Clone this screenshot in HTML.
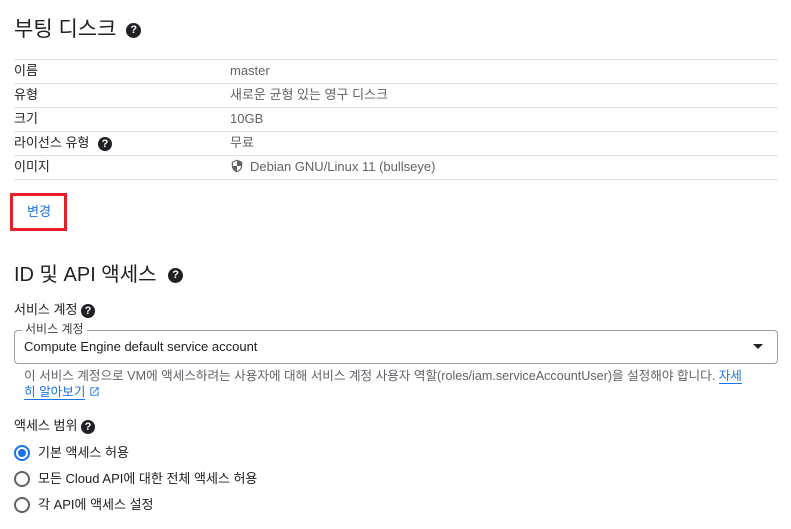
<!DOCTYPE html>
<html><head><meta charset="utf-8"><style>
body{margin:0;background:#fff;font-family:"Liberation Sans","Noto Sans CJK KR",sans-serif;color:#202124;width:791px;height:529px;overflow:hidden;position:relative}
.a{position:absolute;white-space:nowrap}
.q{display:inline-block;width:14px;height:14px;border-radius:50%;background:#202124;color:#fff;font-size:11px;font-weight:bold;text-align:center;line-height:14px;vertical-align:middle}
.line{position:absolute;left:14px;width:764px;height:1px;background:#e0e0e0}
.row{position:absolute;font-size:13px;line-height:24px}
.radio{position:absolute;left:14px;width:12px;height:12px;border:2px solid #5f6368;border-radius:50%}
</style></head><body>
<div class="a" style="left:14px;top:15px;font-size:21px;line-height:30px">부팅 디스크 <span class="q" style="width:15px;height:15px;line-height:15px;margin-left:4px">?</span></div>
<div class="line" style="top:59px"></div><div class="line" style="top:83px"></div><div class="line" style="top:107px"></div><div class="line" style="top:131px"></div><div class="line" style="top:155px"></div><div class="line" style="top:179px"></div>
<div class="row" style="left:14px;top:59px">이름</div><div class="row" style="left:230px;top:59px;color:#5f6368">master</div>
<div class="row" style="left:14px;top:83px">유형</div><div class="row" style="left:230px;top:83px;color:#5f6368">새로운 균형 있는 영구 디스크</div>
<div class="row" style="left:14px;top:107px">크기</div><div class="row" style="left:230px;top:107px;color:#5f6368">10GB</div>
<div class="row" style="left:14px;top:131px">라이선스 유형 <span class="q" style="margin-left:5px">?</span></div><div class="row" style="left:230px;top:131px;color:#5f6368">무료</div>
<div class="row" style="left:14px;top:155px">이미지</div>
<div class="row" style="left:230px;top:155px;color:#5f6368"><svg width="14" height="14" viewBox="0 0 24 24" style="vertical-align:-2px;margin-right:6px"><path d="M12 1L3 5v6c0 5.5 3.8 10.7 9 12 5.2-1.3 9-6.5 9-12V5z" fill="#5f6368"/><path d="M12 3v9H5V6zM12 12h7c-.5 4.1-3.3 7.8-7 8.9z" fill="#fff"/></svg>Debian GNU/Linux 11 (bullseye)</div>
<div class="a" style="left:10px;top:193px;width:51px;height:32px;border:3.5px solid #e8202a"></div>
<div class="a" style="left:27px;top:202px;font-size:13px;line-height:20px;color:#1a73e8">변경</div>
<div class="a" style="left:14px;top:260px;font-size:20px;line-height:30px">ID 및 API 액세스 <span class="q" style="width:15px;height:15px;line-height:15px;margin-left:6px">?</span></div>
<div class="a" style="left:14px;top:300px;font-size:13px;line-height:20px">서비스 계정 <span class="q">?</span></div>
<div class="a" style="left:14px;top:330px;width:762px;height:32px;border:1px solid #9aa0a6;border-radius:4px"></div>
<div class="a" style="left:22px;top:321px;font-size:12px;line-height:16px;background:#fff;padding:0 3px;color:#3c4043">서비스 계정</div>
<div class="a" style="left:24px;top:338px;font-size:13px;line-height:18px">Compute Engine default service account</div>
<div class="a" style="left:753px;top:344px;width:0;height:0;border-left:5px solid transparent;border-right:5px solid transparent;border-top:5px solid #202124"></div>
<div class="a" style="left:24px;top:368px;font-size:12.6px;line-height:16px;color:#5f6368">이 서비스 계정으로 VM에 액세스하려는 사용자에 대해 서비스 계정 사용자 역할(roles/iam.serviceAccountUser)을 설정해야 합니다. <span style="color:#1a73e8;border-bottom:1px solid #1a73e8">자세</span></div>
<div class="a" style="left:24px;top:384px;font-size:12.6px;line-height:16px;color:#1a73e8"><span style="border-bottom:1px solid #1a73e8">히 알아보기</span> <svg width="11" height="11" viewBox="0 0 24 24" style="vertical-align:-1px"><path d="M19 19H5V5h7V3H3v18h18v-9h-2zM14 3v2h3.6l-9.8 9.8 1.4 1.4L19 6.4V10h2V3z" fill="#1a73e8"/></svg></div>
<div class="a" style="left:14px;top:416px;font-size:13px;line-height:20px">액세스 범위 <span class="q">?</span></div>
<div class="radio" style="top:445px;border-color:#1a73e8"><div style="position:absolute;left:2px;top:2px;width:8px;height:8px;border-radius:50%;background:#1a73e8"></div></div>
<div class="a" style="left:38px;top:443px;font-size:13px;line-height:20px">기본 액세스 허용</div>
<div class="radio" style="top:471px"></div>
<div class="a" style="left:38px;top:469px;font-size:13px;line-height:20px">모든 Cloud API에 대한 전체 액세스 허용</div>
<div class="radio" style="top:497px"></div>
<div class="a" style="left:38px;top:495px;font-size:13px;line-height:20px">각 API에 액세스 설정</div>
</body></html>
